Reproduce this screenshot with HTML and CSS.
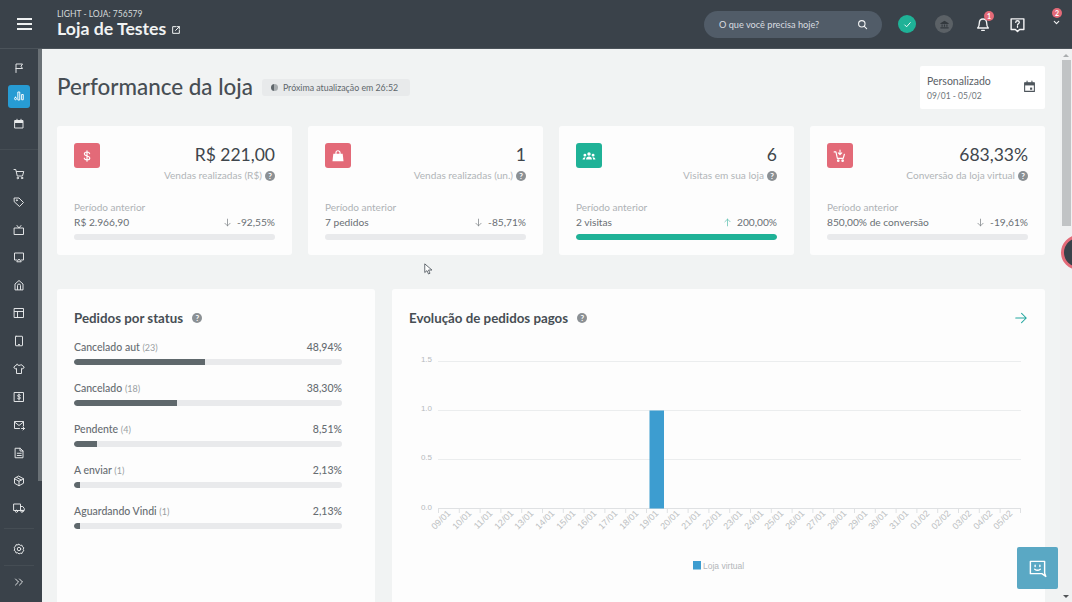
FILE: index.html
```html
<!DOCTYPE html>
<html lang="pt-BR">
<head>
<meta charset="utf-8">
<title>Performance da loja</title>
<link rel="stylesheet" href="styles.css">
</head>
<body>
<header class="topbar">
  <button class="burger" aria-label="Menu"><span></span><span></span><span></span></button>
  <div class="store">
    <div class="store-plan">LIGHT - LOJA: 756579</div>
    <div class="store-name">Loja de Testes
      <svg class="ext" viewBox="0 0 24 24"><path d="M20 13v7H4V4h7M14 4h6v6M20 4l-9 9"/></svg>
    </div>
  </div>
  <div class="top-actions">
    <div class="search"><span>O que você precisa hoje?</span>
      <svg class="search-ico" viewBox="0 0 24 24"><circle cx="10.5" cy="10.5" r="7"/><path d="M16 16l5 5"/></svg>
    </div>
    <span class="round round-ok"><svg viewBox="0 0 24 24"><path d="M6 13l4 4 8-9"/></svg></span>
    <span class="round round-bank"><svg viewBox="0 0 24 24"><path class="solid" d="M12 4l9 5v2H3V9zM3 18h18v2.5H3zM5.500 12h2.500v5H5.500zM10.700 12h2.600v5h-2.600zM16 12h2.500v5H16z"/></svg></span>
    <span class="tool tool-bell">
      <svg viewBox="0 0 24 24"><path d="M4 18c2-2 2.500-4 2.500-7.500C6.500 7 9 4.500 12 4.500s5.500 2.500 5.500 6c0 3.500.5 5.500 2.500 7.500zM10 21.500h4"/></svg>
      <b class="badge">1</b>
    </span>
    <span class="tool tool-help">
      <svg viewBox="0 0 24 24"><path d="M3 4h18v15h-6l-3 3-3-3H3z"/><path class="thin" d="M9.500 9c0-1.500 1-2.300 2.500-2.300s2.600.9 2.600 2.200c0 2-2.600 2-2.600 3.800M12 14.500v1.500"/></svg>
    </span>
    <span class="tool tool-user">
      <svg viewBox="0 0 24 24"><path d="M6 9l6 6 6-6"/></svg>
      <b class="badge">2</b>
    </span>
  </div>
</header>

<div class="shell">
  <nav class="sidebar">
    <div class="side-scroll">
      <div class="side-group">
        <a class="side-item"><svg viewBox="0 0 24 24"><path d="M6 21V4h13l-3 4.500 3 4.500H6"/></svg></a>
        <a class="side-item side-active"><svg viewBox="0 0 24 24"><path d="M5 14.500a1.800 1.800 0 0 1 1.800 1.800v1.400a1.800 1.800 0 0 1-3.600 0v-1.400A1.800 1.800 0 0 1 5 14.500zM10.500 4h3v16h-3zM18 9h2.500v10.500H18z"/></svg></a>
        <a class="side-item"><svg viewBox="0 0 24 24"><path class="solid" d="M4 5h16v5H4z"/><path d="M4 5h16v15H4zM8 2.500v3M16 2.500v3"/></svg></a>
      </div>
      <div class="side-group side-main">
        <a class="side-item"><svg viewBox="0 0 24 24"><path d="M2 3h3.500l3 13h10.500l2.500-9H7"/><circle cx="9.500" cy="20" r="1.500"/><circle cx="18" cy="20" r="1.500"/></svg></a>
        <a class="side-item"><svg viewBox="0 0 24 24"><path d="M3 4h9l9 9-8 8-10-9z"/><circle cx="7.500" cy="8.500" r="1"/></svg></a>
        <a class="side-item"><svg viewBox="0 0 24 24"><path d="M3 8h18v13H3zM8 3l4 5 4-5"/></svg></a>
        <a class="side-item"><svg viewBox="0 0 24 24"><path d="M8 18H3V4h18v14h-5M8 21l4-5 4 5z"/></svg></a>
        <a class="side-item"><svg viewBox="0 0 24 24"><path d="M4 21V10l8-7 8 7v11zM9 21v-8a3 3 0 0 1 6 0v8"/></svg></a>
        <a class="side-item"><svg viewBox="0 0 24 24"><path d="M3 3h18v18H3zM3 9h18M9 9v12"/></svg></a>
        <a class="side-item"><svg viewBox="0 0 24 24"><path d="M6 2.500h12a1 1 0 0 1 1 1v17a1 1 0 0 1-1 1H6a1 1 0 0 1-1-1v-17a1 1 0 0 1 1-1zM11 19h2"/></svg></a>
        <a class="side-item"><svg viewBox="0 0 24 24"><path d="M8 3L1.500 8l3 4L7 10.800V21h10V10.800l2.500 1.200 3-4L16 3c-1 2.500-7 2.500-8 0z"/></svg></a>
        <a class="side-item"><svg viewBox="0 0 24 24"><path d="M3 3h18v18H3z"/><path class="thin" d="M15 8.500c-1-1.500-6-1.500-6 1 0 3 6 1.500 6 4.500 0 2.500-5 2.500-6 1M12 6v12"/></svg></a>
        <a class="side-item"><svg viewBox="0 0 24 24"><path d="M13 19H3V5h18v9M3 6l9 7 9-7M17 19h6M20 16l3 3-3 3"/></svg></a>
        <a class="side-item"><svg viewBox="0 0 24 24"><path d="M5 2.500h9.500L20 8v13.500H5zM14 2.500V8h6M8.500 12.500h8M8.500 17h8"/></svg></a>
        <a class="side-item"><svg viewBox="0 0 24 24"><path d="M12 2.500l9 5v9l-9 5-9-5v-9zM3 7.500l9 5 9-5M12 12.500v9M7.500 5l9 5"/></svg></a>
        <a class="side-item"><svg viewBox="0 0 24 24"><path d="M2 4h13v13H2zM15 9h4.500l3 4v4H15"/><circle cx="7" cy="18.500" r="2.200"/><circle cx="18" cy="18.500" r="2.200"/></svg></a>
      </div>
      <div class="side-group side-settings">
        <a class="side-item"><svg viewBox="0 0 24 24"><path d="M12 2.500l2.500 2.300 3.400-.4 1 3.200 2.800 2-1.300 3.100 1.300 3-2.800 2-1 3.300-3.400-.5L12 22l-2.500-2.500-3.400.5-1-3.300-2.800-2 1.300-3-1.300-3.100 2.800-2 1-3.200 3.400.4z"/><circle cx="12" cy="12" r="3.500"/></svg></a>
      </div>
      <div class="side-group side-foot">
        <a class="side-item"><svg viewBox="0 0 24 24"><path d="M5 6l6 6-6 6M13 6l6 6-6 6"/></svg></a>
      </div>
    </div>
  </nav>

  <main class="main">
    <section class="page-head">
      <h1 class="page-title">Performance da loja</h1>
      <div class="chip"><i class="chip-dot"></i>Próxima atualização em 26:52</div>
      <div class="date-card">
        <div>
          <div class="date-label">Personalizado</div>
          <div class="date-range">09/01 - 05/02</div>
        </div>
        <svg class="date-ico" viewBox="0 0 24 24"><path class="solid" d="M3 5h18v5H3z"/><path d="M3 5h18v16H3zM7.500 2v4M16.500 2v4"/><path class="solid" d="M13 14h4v4h-4z"/></svg>
      </div>
    </section>

    <section class="cards">
      <article class="card">
        <div class="card-top">
          <span class="card-ico bg-red"><svg viewBox="0 0 24 24"><path d="M16.500 8c-.5-2-2.300-2.800-4.500-2.800-2.500 0-4.500 1.200-4.500 3.300 0 4.500 9.300 2.500 9.300 7 0 2.200-2.300 3.300-4.800 3.300-2.300 0-4.300-1-4.800-3M12 3v18"/></svg></span>
          <div class="card-head">
            <div class="card-value">R$ 221,00</div>
            <div class="card-label">Vendas realizadas (R$) <i class="qm">?</i></div>
          </div>
        </div>
        <div class="prev-label">Período anterior</div>
        <div class="prev-row"><span>R$ 2.966,90</span><span class="delta"><svg viewBox="0 0 24 24"><path d="M12 3v18M5 14l7 7 7-7"/></svg> -92,55%</span></div>
        <div class="track"><div class="fill fill-none"></div></div>
      </article>
      <article class="card">
        <div class="card-top">
          <span class="card-ico bg-red"><svg viewBox="0 0 24 24"><path class="solid" d="M4 8h16l1.500 13h-19z"/><path d="M8.500 11V6.500a3.500 3.500 0 0 1 7 0V11"/></svg></span>
          <div class="card-head">
            <div class="card-value">1</div>
            <div class="card-label">Vendas realizadas (un.) <i class="qm">?</i></div>
          </div>
        </div>
        <div class="prev-label">Período anterior</div>
        <div class="prev-row"><span>7 pedidos</span><span class="delta"><svg viewBox="0 0 24 24"><path d="M12 3v18M5 14l7 7 7-7"/></svg> -85,71%</span></div>
        <div class="track"><div class="fill fill-none"></div></div>
      </article>
      <article class="card">
        <div class="card-top">
          <span class="card-ico bg-green"><svg viewBox="0 0 24 24"><path class="solid" d="M12 5.500a3 3 0 1 1 0 6 3 3 0 0 1 0-6zM5 8a2.500 2.500 0 1 1 0 5 2.500 2.500 0 0 1 0-5zM19 8a2.500 2.500 0 1 1 0 5 2.500 2.500 0 0 1 0-5zM7 18c0-3 2-5 5-5s5 2 5 5zM1 18c0-2 1.500-4 4-4l1 .3C5.300 15.300 5 16.500 5 18zM23 18c0-2-1.500-4-4-4l-1 .3c.7 1 1 2.200 1 3.700z"/></svg></span>
          <div class="card-head">
            <div class="card-value">6</div>
            <div class="card-label">Visitas em sua loja <i class="qm">?</i></div>
          </div>
        </div>
        <div class="prev-label">Período anterior</div>
        <div class="prev-row"><span>2 visitas</span><span class="delta"><svg class="up" viewBox="0 0 24 24"><path d="M12 21V3M5 10l7-7 7 7"/></svg> 200,00%</span></div>
        <div class="track"><div class="fill fill-green"></div></div>
      </article>
      <article class="card">
        <div class="card-top">
          <span class="card-ico bg-red"><svg viewBox="0 0 24 24"><path d="M2 5h3l2.500 11h10l2-7M12 2v7M9 6.500l3 3 3-3"/><circle cx="9" cy="20" r="1.300"/><circle cx="16.500" cy="20" r="1.300"/></svg></span>
          <div class="card-head">
            <div class="card-value">683,33%</div>
            <div class="card-label">Conversão da loja virtual <i class="qm">?</i></div>
          </div>
        </div>
        <div class="prev-label">Período anterior</div>
        <div class="prev-row"><span>850,00% de conversão</span><span class="delta"><svg viewBox="0 0 24 24"><path d="M12 3v18M5 14l7 7 7-7"/></svg> -19,61%</span></div>
        <div class="track"><div class="fill fill-none"></div></div>
      </article>
    </section>

    <section class="panels">
      <article class="panel panel-status">
        <h2 class="panel-title">Pedidos por status <i class="qm qm-title">?</i></h2>
        <div class="status-list">
          <div class="status">
            <div class="status-row"><span>Cancelado aut <small>(23)</small></span><span>48,94%</span></div>
            <div class="track"><div class="fill fill-dark" style="width:48.94%"></div></div>
          </div>
          <div class="status">
            <div class="status-row"><span>Cancelado <small>(18)</small></span><span>38,30%</span></div>
            <div class="track"><div class="fill fill-dark" style="width:38.3%"></div></div>
          </div>
          <div class="status">
            <div class="status-row"><span>Pendente <small>(4)</small></span><span>8,51%</span></div>
            <div class="track"><div class="fill fill-dark" style="width:8.51%"></div></div>
          </div>
          <div class="status">
            <div class="status-row"><span>A enviar <small>(1)</small></span><span>2,13%</span></div>
            <div class="track"><div class="fill fill-dark" style="width:2.13%"></div></div>
          </div>
          <div class="status">
            <div class="status-row"><span>Aguardando Vindi <small>(1)</small></span><span>2,13%</span></div>
            <div class="track"><div class="fill fill-dark" style="width:2.13%"></div></div>
          </div>
        </div>
      </article>
      <article class="panel">
        <div class="panel-head">
          <h2 class="panel-title">Evolução de pedidos pagos <i class="qm qm-title">?</i></h2>
          <svg class="go" viewBox="0 0 24 24"><path d="M3 12h18M13 4l8 8-8 8"/></svg>
        </div>
        <svg class="chart" viewBox="0 0 619 240" width="619" height="240">
          <g class="grid">
            <path d="M29 21.500H612M29 70.500H612M29 119.500H612"/>
            <path class="base" d="M29 168.500H612"/>
            <path class="ticks" d="M29.500 168v5M50.300 168v5M71.100 168v5M91.900 168v5M112.700 168v5M133.500 168v5M154.300 168v5M175.100 168v5M195.900 168v5M216.700 168v5M237.500 168v5M258.300 168v5M279.100 168v5M299.900 168v5M320.700 168v5M341.500 168v5M362.300 168v5M383.100 168v5M403.900 168v5M424.700 168v5M445.500 168v5M466.300 168v5M487.100 168v5M507.900 168v5M528.700 168v5M549.500 168v5M570.300 168v5M591.100 168v5M611.500 168v5"/>
          </g>
          <g class="y-labels">
            <text x="23" y="22">1.5</text>
            <text x="23" y="71">1.0</text>
            <text x="23" y="120">0.5</text>
            <text x="23" y="170">0.0</text>
          </g>
          <rect class="bar" x="240.500" y="70.500" width="14.500" height="98"/>
          <g class="x-labels">
            <text transform="translate(42 174) rotate(-45)">09/01</text>
            <text transform="translate(63 174) rotate(-45)">10/01</text>
            <text transform="translate(84 174) rotate(-45)">11/01</text>
            <text transform="translate(105 174) rotate(-45)">12/01</text>
            <text transform="translate(125 174) rotate(-45)">13/01</text>
            <text transform="translate(146 174) rotate(-45)">14/01</text>
            <text transform="translate(167 174) rotate(-45)">15/01</text>
            <text transform="translate(188 174) rotate(-45)">16/01</text>
            <text transform="translate(209 174) rotate(-45)">17/01</text>
            <text transform="translate(230 174) rotate(-45)">18/01</text>
            <text transform="translate(250 174) rotate(-45)">19/01</text>
            <text transform="translate(271 174) rotate(-45)">20/01</text>
            <text transform="translate(292 174) rotate(-45)">21/01</text>
            <text transform="translate(313 174) rotate(-45)">22/01</text>
            <text transform="translate(334 174) rotate(-45)">23/01</text>
            <text transform="translate(355 174) rotate(-45)">24/01</text>
            <text transform="translate(375 174) rotate(-45)">25/01</text>
            <text transform="translate(396 174) rotate(-45)">26/01</text>
            <text transform="translate(417 174) rotate(-45)">27/01</text>
            <text transform="translate(438 174) rotate(-45)">28/01</text>
            <text transform="translate(459 174) rotate(-45)">29/01</text>
            <text transform="translate(479 174) rotate(-45)">30/01</text>
            <text transform="translate(500 174) rotate(-45)">31/01</text>
            <text transform="translate(521 174) rotate(-45)">01/02</text>
            <text transform="translate(542 174) rotate(-45)">02/02</text>
            <text transform="translate(563 174) rotate(-45)">03/02</text>
            <text transform="translate(584 174) rotate(-45)">04/02</text>
            <text transform="translate(604 174) rotate(-45)">05/02</text>
          </g>
          <rect class="bar" x="284" y="221" width="8" height="8.500"/>
          <text class="legend" x="294" y="228.500">Loja virtual</text>
        </svg>
      </article>
    </section>
  </main>

  <div class="scrollbar">
    <span class="arrow arrow-up"></span>
    <span class="thumb"></span>
    <span class="arrow arrow-down"></span>
  </div>
</div>

<span class="edge-dot"></span>
<button class="chat" aria-label="Chat">
  <svg viewBox="0 0 24 24"><path d="M3 3h18v15l1.500 4-5-3.500H3z"/><path d="M9 8v1.500M15 8v1.500M8.500 13c2 1.500 5 1.500 7 0"/></svg>
</button>
<svg class="cursor" viewBox="0 0 12 16"><path d="M1 1v11l3-2.500 2 4.500 2-1-2-4.300h4z"/></svg>
</body>
</html>
```
FILE: styles.css
```css
* { box-sizing: border-box; }
html, body { margin: 0; height: 100%; }
body {
  width: 1072px;
  height: 602px;
  overflow: hidden;
  display: flex;
  flex-direction: column;
  font-family: Lato, "Noto Sans", sans-serif;
  color: #4a5157;
  background: #f1f3f3;
}
svg { display: block; fill: none; stroke: currentColor; stroke-width: 2; stroke-linecap: round; stroke-linejoin: round; }
svg .solid { fill: currentColor; stroke: none; }
svg .thin { stroke-width: 1.8; }
h1, h2 { margin: 0; font-weight: 400; }

/* top bar */
.topbar {
  flex: 0 0 49px;
  display: flex;
  align-items: center;
  background: #3a424a;
  color: #fff;
  border-bottom: 1px solid #4b535a;
}
.burger {
  width: 57px;
  padding: 0 0 0 17px;
  border: 0;
  background: none;
  display: flex;
  flex-direction: column;
  gap: 3px;
}
.burger span { display: block; width: 15px; height: 2px; background: #eef0f1; }
.store { margin-top: -1px; }
.store-plan { font-size: 8.500px; line-height: 11px; color: #d5d9db; }
.store-name { display: flex; align-items: center; gap: 5px; font-size: 17.700px; line-height: 18px; font-weight: 700; color: #f1f3f3; }
.ext { width: 10px; height: 10px; margin-top: 2px; stroke-width: 2.400; }
.top-actions { margin-left: auto; display: flex; align-items: center; }
.search {
  width: 178px;
  height: 27px;
  padding: 0 14px 0 15px;
  border-radius: 14px;
  background: #515c68;
  display: flex;
  align-items: center;
  justify-content: space-between;
  font-size: 9.200px;
  color: #d9dde0;
}
.search-ico { width: 11px; height: 11px; stroke-width: 2.400; color: #f3f4f5; }
.round { width: 18px; height: 18px; border-radius: 50%; display: flex; align-items: center; justify-content: center; }
.round svg { width: 11px; height: 11px; }
.round-ok { margin-left: 16px; background: #1fb297; }
.round-bank { margin-left: 19px; background: #5b6166; color: #33393e; }
.tool { position: relative; display: block; color: #f3f4f5; }
.tool svg { width: 16px; height: 16px; }
.tool-bell { margin-left: 22px; }
.tool-help { margin-left: 18px; }
.tool-help svg { width: 17px; height: 17px; }
.tool-user { margin: -4px 11px 0 26px; }
.tool-user svg { width: 9px; height: 9px; stroke-width: 3; }
.badge {
  position: absolute;
  width: 10px;
  height: 10px;
  border-radius: 50%;
  background: #e36a78;
  color: #fff;
  font-size: 7px;
  line-height: 10px;
  font-weight: 700;
  text-align: center;
}
.tool-bell .badge { left: 9px; top: -5px; }
.tool-user .badge { left: 0; top: -10px; }

/* shell */
.shell { flex: 1; min-height: 0; display: flex; }
.sidebar { flex: 0 0 42px; background: #3a424a; color: #e9ebec; position: relative; }
.sidebar::after {
  content: "";
  position: absolute;
  left: 38px;
  top: 0;
  width: 4px;
  height: 432px;
  background: #6a7176;
}
.side-scroll { width: 38px; display: flex; flex-direction: column; padding-top: 5px; }
.side-group { display: flex; flex-direction: column; align-items: center; }
.side-main { margin-top: 11px; padding-top: 10px; border-top: 1px solid #454d54; }
.side-settings { margin: 6px 4px 0; padding-top: 6px; width: 30px; border-top: 1px solid #454d54; }
.side-foot { margin: 2px 4px 0; width: 30px; border-top: 1px solid #454d54; padding-top: 2px; }
.side-item { width: 22px; height: 27.900px; display: flex; align-items: center; justify-content: center; }
.side-item svg { width: 12px; height: 12px; stroke-width: 1.900; }
.side-active { height: 23px; margin: 3px 0 2px; border-radius: 3px; background: #279bd3; color: #fff; }

/* main */
.main { flex: 1; min-width: 0; padding: 17px 15px 0; overflow: hidden; }
.page-head { display: flex; align-items: center; height: 43px; }
.page-title { margin-top: -3px; font-size: 22.400px; color: #474e54; font-weight: 500; white-space: nowrap; }
.chip {
  margin-left: 9px;
  height: 17px;
  padding: 0 12px 0 9px;
  display: flex;
  align-items: center;
  gap: 5px;
  border-radius: 3px;
  background: #e8eaeb;
  font-size: 8.800px;
  color: #60676c;
}
.chip-dot { width: 7px; height: 7px; border-radius: 50%; background: linear-gradient(90deg, #5f666b 50%, #a8adb0 50%); }
.date-card {
  margin-left: auto;
  width: 125px;
  height: 43px;
  padding: 9px 9px 0 7px;
  display: flex;
  justify-content: space-between;
  border-radius: 2px;
  background: #fff;
}
.date-label { font-size: 10.500px; line-height: 13px; color: #5a6166; }
.date-range { margin-top: 3px; font-size: 8.500px; line-height: 11px; color: #6f767a; }
.date-ico { width: 13px; height: 13px; margin-top: 5px; stroke-width: 2; color: #4e565c; }

/* cards */
.cards { margin-top: 17px; display: grid; grid-template-columns: repeat(4, 235px); gap: 16px; }
.card { height: 129px; padding: 17px; border-radius: 3px; background: #fdfdfd; }
.card-top { display: flex; justify-content: space-between; height: 56px; }
.card-ico { width: 26px; height: 25px; border-radius: 3px; color: #fff; display: flex; align-items: center; justify-content: center; }
.card-ico svg { width: 14px; height: 14px; }
.bg-red { background: #e36a78; }
.bg-green { background: #1fb297; }
.card-head { text-align: right; }
.card-value { font-size: 17.500px; line-height: 24px; color: #3f464c; font-weight: 400; }
.card-label { display: flex; justify-content: flex-end; align-items: center; gap: 3px; margin-top: 2px; font-size: 10.100px; line-height: 13px; color: #b1b5b8; }
.qm {
  display: inline-block;
  width: 10px;
  height: 10px;
  border-radius: 50%;
  background: #8b9094;
  color: #fff;
  font-size: 8px;
  line-height: 10px;
  font-weight: 700;
  font-style: normal;
  text-align: center;
}
.prev-label { margin-top: 2px; font-size: 10px; line-height: 13px; color: #aeb2b5; }
.prev-row { margin-top: 2px; display: flex; justify-content: space-between; font-size: 10.200px; line-height: 13px; color: #696f74; }
.delta { display: flex; align-items: center; gap: 2px; white-space: pre; }
.delta svg { width: 9px; height: 9px; color: #7d8387; }
.delta .up { color: #5fc0b0; }
.track { height: 6px; border-radius: 3px; background: #e9eaec; overflow: hidden; }
.card .track { margin-top: 5px; }
.fill { height: 100%; border-radius: 3px 0 0 3px; }
.fill-none { width: 0; }
.fill-green { width: 100%; border-radius: 3px; background: #1fb297; }
.fill-dark { background: #5f686c; }

/* panels */
.panels { margin-top: 34px; display: grid; grid-template-columns: 318px 653px; gap: 17px; }
.panel { height: 340px; padding: 20px 17px 0; border-radius: 3px; background: #fdfdfd; }
.panel-status { padding-right: 33px; }
.panel-title { height: 18px; display: flex; align-items: center; font-size: 13.300px; font-weight: 700; color: #474e54; white-space: pre; }
.panel-title .qm { margin-left: 6px; }
.status-list { margin-top: 12px; display: flex; flex-direction: column; gap: 14px; }
.status { height: 27px; }
.status-row { height: 15px; display: flex; justify-content: space-between; align-items: center; margin-bottom: 5px; font-size: 10.500px; font-weight: 500; color: #666c71; }
.status-row small { font-size: 9px; font-weight: 400; color: #999ea2; }
.panel-head { display: flex; justify-content: space-between; align-items: center; }
.go { width: 14px; height: 14px; stroke-width: 1.800; color: #25a7a0; }
.chart { margin-top: 13px; overflow: visible; font-family: "Liberation Sans", Arial, sans-serif; stroke: none; }
.grid path { stroke: #ebedee; stroke-width: 1; stroke-linecap: butt; fill: none; }
.grid .base, .grid .ticks { stroke: #dfe1e3; }
.y-labels text { font-size: 8px; fill: #b6babd; text-anchor: end; stroke: none; }
.x-labels text { font-size: 9px; fill: #bcc0c2; text-anchor: end; stroke: none; }
.legend { font-size: 8.500px; fill: #b2b6b9; stroke: none; }
.bar { fill: #3d9dd0; stroke: none; }

/* scrollbar */
.scrollbar { flex: 0 0 12px; position: relative; background: #f0f1f2; }
.thumb { position: absolute; left: 2px; top: 11px; width: 9px; height: 166px; background: #c1c3c5; }
.arrow { position: absolute; left: 3px; width: 0; height: 0; border: 3px solid transparent; }
.arrow-up { top: 2px; border-bottom-color: #a9acae; }
.arrow-down { bottom: 1px; border-top-color: #505356; }

/* overlays */
.edge-dot {
  position: absolute;
  left: 1061px;
  top: 235px;
  width: 35px;
  height: 35px;
  border-radius: 50%;
  border: 3px solid #e36a78;
  background: #3a424a;
}
.chat {
  position: absolute;
  left: 1017px;
  top: 547px;
  width: 41px;
  height: 42px;
  padding: 0;
  border: 0;
  border-radius: 2px;
  background: #5aa8c4;
  color: #fff;
  display: flex;
  align-items: center;
  justify-content: center;
}
.chat svg { width: 19px; height: 19px; stroke-width: 1.800; }
.cursor { position: absolute; left: 424px; top: 263px; width: 9px; height: 13px; fill: #fff; stroke: #3a424a; stroke-width: 1; }
```
